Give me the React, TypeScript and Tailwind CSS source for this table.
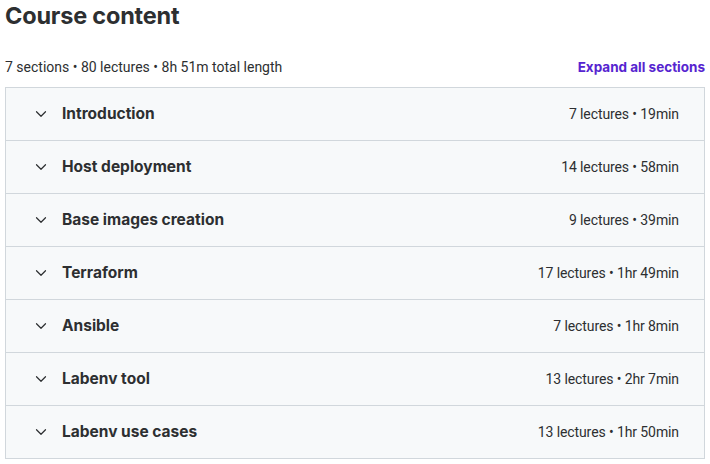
import { ChevronDown } from "lucide-react"

const sections = [
  { title: "Introduction", meta: "7 lectures • 19min" },
  { title: "Host deployment", meta: "14 lectures • 58min" },
  { title: "Base images creation", meta: "9 lectures • 39min" },
  { title: "Terraform", meta: "17 lectures • 1hr 49min" },
  { title: "Ansible", meta: "7 lectures • 1hr 8min" },
  { title: "Labenv tool", meta: "13 lectures • 2hr 7min" },
  { title: "Labenv use cases", meta: "13 lectures • 1hr 50min" },
]

function SectionRow({ title, meta }: { title: string; meta: string }) {
  return (
    <div className="flex h-[53px] items-center justify-between border-b border-[#d1d7dc] bg-[#f7f9fa] pl-[26px] pr-[25px] last:h-[52px] last:border-b-0">
      <div className="flex items-center gap-[12px]">
        <ChevronDown className="h-[18px] w-[18px] text-[#2d2f31]" strokeWidth={1.6} />
        <span className="font-['Inter',sans-serif] text-[15.5px] font-bold text-[#2d2f31]">{title}</span>
      </div>
      <span className="font-['Roboto',sans-serif] text-[14px] tracking-[-0.1px] text-[#2d2f31]">{meta}</span>
    </div>
  )
}

export default function App() {
  return (
    <div className="min-h-screen bg-white px-[5px] pt-[1px] font-['Inter',sans-serif] text-[#2d2f31]">
      <h2 className="text-[23.5px] font-bold leading-[30px] tracking-[-0.2px]">Course content</h2>
      <div className="mt-[26px] flex items-center justify-between">
        <span className="font-['Roboto',sans-serif] text-[14px] leading-[20px]">
          7 sections • 80 lectures • 8h 51m total length
        </span>
        <button className="text-[13.5px] font-bold leading-[20px] text-[#5624d0]">Expand all sections</button>
      </div>
      <div className="mt-[10px] border border-[#d1d7dc]">
        {sections.map((s) => (
          <SectionRow key={s.title} title={s.title} meta={s.meta} />
        ))}
      </div>
    </div>
  )
}
